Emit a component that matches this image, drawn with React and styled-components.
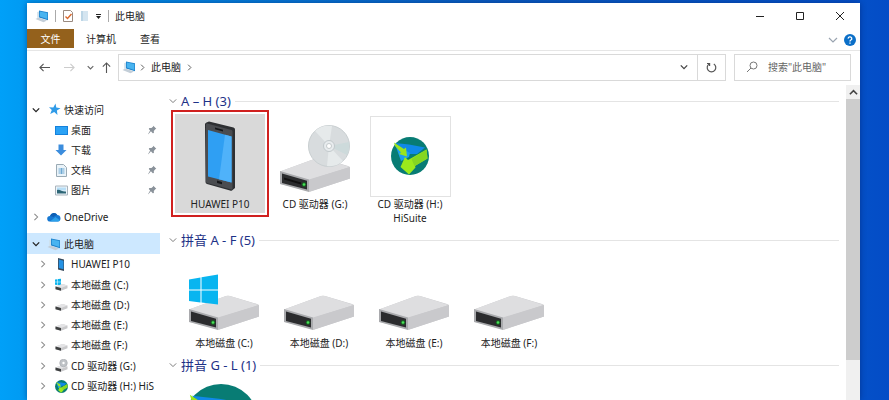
import React from 'react';
import styled, { createGlobalStyle, css } from 'styled-components';

const Global = createGlobalStyle`
  *, *::before, *::after { box-sizing: border-box; }
  html, body, #root { height: 100%; }
  body {
    margin: 0;
    overflow: hidden;
    color: #222;
    font: 10px/14px "Noto Sans", "Noto Sans CJK SC", sans-serif;
  }
  button, input { font: inherit; color: inherit; }
  svg { display: block; flex: none; }
`;

const Desktop = styled.div`
  height: 100%;
  padding: 3px 29px 0 27px;
  background: linear-gradient(90deg, #00a0f8 0%, #0098f0 4%, #0a5cc0 55%, #0450c8 97%, #044cc6 100%);
`;

const Window = styled.main`
  display: flex;
  flex-direction: column;
  height: 100%;
  background: #fff;
  box-shadow: 0 0 6px rgba(0, 20, 80, 0.45);
`;

const PlainButton = styled.button`
  display: flex;
  align-items: center;
  justify-content: center;
  padding: 0;
  border: 0;
  background: none;
`;

const TitleBar = styled.header`
  display: flex;
  align-items: center;
  height: 26px;
  padding-left: 8px;
`;

const QuickTools = styled.div`
  display: flex;
  align-items: center;
  gap: 6px;
`;

const Rule = styled.span`
  width: 1px;
  height: 12px;
  background: #aaa;
`;

const Title = styled.h1`
  flex: 1;
  margin: 0 0 0 6px;
  font-size: 10px;
  font-weight: 400;
`;

const WindowButton = styled(PlainButton)`
  width: 40px;
  height: 26px;
`;

const Ribbon = styled.nav`
  display: flex;
  align-items: center;
  height: 22px;
  padding-right: 4px;
  border-bottom: 1px solid #e6e6e6;
`;

const Tab = styled(PlainButton)`
  height: 19px;
  margin-bottom: 2px;
  padding: 0 12px;
  ${(p) => p.$primary && css`
    width: 47px;
    background: #94611c;
    color: #fff;
  `}
`;

const RibbonEnd = styled.div`
  display: flex;
  align-items: center;
  gap: 6px;
  margin-left: auto;
`;

const NavBar = styled.div`
  display: flex;
  align-items: center;
  height: 32px;
  padding: 0 9px 0 8px;
`;

const NavButton = styled(PlainButton)`
  width: ${(p) => p.$width}px;
  height: 24px;
`;

const Address = styled.div`
  display: flex;
  align-items: center;
  flex: 1;
  height: 27px;
  padding-left: 3px;
  border: 1px solid #d9d9d9;
`;

const Crumb = styled(PlainButton)`
  gap: 5px;
`;

const CrumbRoot = styled.span`
  display: flex;
  align-items: center;
  gap: 3px;
`;

const Spacer = styled.span`
  flex: 1;
`;

const Refresh = styled(PlainButton)`
  width: 28px;
  height: 100%;
  border-left: 1px solid #d9d9d9;
`;

const Search = styled.label`
  display: flex;
  align-items: center;
  gap: 10px;
  width: 117px;
  height: 27px;
  margin-left: 8px;
  padding-left: 11px;
  border: 1px solid #d9d9d9;

  input {
    flex: 1;
    min-width: 0;
    padding: 0;
    border: 0;
    outline: 0;
    background: none;
  }
  input::placeholder { color: #666; opacity: 1; }
`;

const Body = styled.div`
  display: flex;
  flex: 1;
  min-height: 0;
`;

const Sidebar = styled.aside`
  width: 133px;
  padding-top: 16px;
  overflow: hidden;
`;

const Branch = styled.section`
  margin-bottom: 6px;
`;

const Sublist = styled.ul`
  margin: 0 0 1px;
  padding: 0;
  list-style: none;
`;

const Node = styled.a`
  display: flex;
  align-items: center;
  gap: 7px;
  height: ${(p) => (p.$child ? 20 : 21)}px;
  padding-left: ${(p) => (p.$child ? 12 : 5)}px;
  color: inherit;
  text-decoration: none;
  white-space: nowrap;
  background: ${(p) => (p.$selected ? '#cde8ff' : 'none')};
`;

const NodeIcon = styled.span`
  display: flex;
  flex: none;
  justify-content: center;
  width: 14px;
  margin-right: -4px;
`;

const PinSlot = styled.span`
  margin-left: auto;
  padding-right: 3px;
`;

const Content = styled.div`
  flex: 1;
  min-width: 0;
  padding: 9px 7px 0 9px;
  overflow: hidden;
`;

const GroupHeader = styled.h2`
  display: flex;
  align-items: center;
  gap: 4px;
  height: 18px;
  margin: 0;
  color: #1e3287;
  font-size: 13px;
  font-weight: 400;
  line-height: 18px;

  &::after {
    content: "";
    flex: 1;
    height: 1px;
    background: #e4e4e4;
  }
`;

const Tiles = styled.div`
  display: flex;
  gap: 5px;
  height: ${(p) => p.$height}px;
  padding: 4px 0 0 ${(p) => (p.$inset ? 10 : 6)}px;
`;

const Tile = styled.button`
  display: flex;
  flex-direction: column;
  align-items: center;
  align-self: flex-start;
  width: 90px;
  padding: 2px 0;
  border: 0;
  background: ${(p) => (p.$selected ? '#d9d9d9' : 'none')};
  ${(p) => p.$selected && css`
    outline: 2px solid #d0201f;
    outline-offset: 2px;
  `}
`;

const Thumb = styled.span`
  display: block;
  width: 81px;
  height: 81px;
  border: 1px solid ${(p) => (p.$framed ? '#e2e2e2' : 'transparent')};
`;

const TileLabel = styled.span`
  width: 80px;
  line-height: 14px;
`;

const ScrollBar = styled.div`
  width: 14px;
  margin-top: 2px;
  background: #f0f0f0;
`;

const ScrollArrow = styled(PlainButton)`
  width: 100%;
  height: 14px;
`;

const ScrollThumb = styled.div`
  height: 83%;
  background: #cdcdcd;
`;

const Chevron = ({ dir = 'down', size = 8, color = '#444', weight = 1.2 }) => {
  const d = { down: 'M1 3l4 4 4-4', up: 'M1 7l4-4 4 4', right: 'M3 1l4 4-4 4' }[dir];
  return (
    <svg width={size} height={size} viewBox="0 0 10 10" fill="none" stroke={color} strokeWidth={weight}>
      <path d={d} />
    </svg>
  );
};

const PcIcon = ({ size = 14 }) => (
  <svg width={size} height={size} viewBox="0 0 14 14">
    <path d="M4 1.500l9 1.800v8L4 8.500z" fill="#1f83cc" />
    <path d="M4.800 2.600l7.500 1.500v5.800L4.800 7.600z" fill="#49b4f0" />
    <path d="M.5 10l3-1.500 8.500 3-3.500 1.800z" fill="#c3ced8" />
    <path d="M2.200 3v6L4 8.500v-6z" fill="#cfe0ec" />
  </svg>
);

const CheckPage = () => (
  <svg width="12" height="14" viewBox="0 0 12 14" fill="none">
    <path d="M1.500 1.500h7l2 2v9h-9z" fill="#fff" stroke="#9a8a80" />
    <path d="M3.500 7.500l2 2 4-4.500" stroke="#d9672b" strokeWidth="1.400" />
  </svg>
);

const PalePage = () => (
  <svg width="9" height="12" viewBox="0 0 9 12">
    <path d="M1 1h7v10H1z" fill="#d5e5f0" />
    <path d="M1 1h2v10H1z" fill="#bdd6e6" />
  </svg>
);

const MenuMark = () => (
  <svg width="7" height="7" viewBox="0 0 7 7">
    <path d="M1 1h5v1H1zM1 3h5L3.500 6z" fill="#222" />
  </svg>
);

const Arrow = ({ dir, color = '#555' }) => {
  const d = { left: 'M12 6H1M5 2L1 6l4 4', right: 'M0 6h11M7 2l4 4-4 4', up: 'M6 12V1M2 5l4-4 4 4' }[dir];
  return (
    <svg width="11" height="11" viewBox="0 0 12 12" fill="none" stroke={color} strokeWidth="1.200">
      <path d={d} />
    </svg>
  );
};

const StarIcon = () => (
  <svg width="13" height="13" viewBox="0 0 13 13">
    <path d="M7.500.5l.8 4 4.200.8-3.600 2.200.6 4.500-3.300-2.900-4 2 1.600-4L1 4.300l4.300.3z" fill="#2f9be8" />
  </svg>
);

const DesktopIcon = () => (
  <svg width="13" height="11" viewBox="0 0 13 11">
    <path d="M0 1h13v9H0z" fill="#1481dc" />
    <path d="M1 2h11v7H1z" fill="#2ba2f5" />
  </svg>
);

const DownIcon = () => (
  <svg width="12" height="12" viewBox="0 0 12 12">
    <path d="M3.500.5h5V6h3L6 11.500.5 6h3z" fill="#3c8ddd" />
  </svg>
);

const DocIcon = () => (
  <svg width="11" height="13" viewBox="0 0 11 13">
    <path d="M.5.5h7l3 3v9H.5z" fill="#eaf3f9" stroke="#9aaab4" />
    <path d="M2.500 5h6M2.500 7h6M2.500 9h6M5.500 4v6" stroke="#6fa9d2" />
  </svg>
);

const PhotoIcon = () => (
  <svg width="13" height="11" viewBox="0 0 13 11">
    <path d="M.5 1h12v9H.5z" fill="#eef5fa" stroke="#a9b4bc" />
    <path d="M2 2.500h9v3H2z" fill="#b8def6" />
    <path d="M2 5c3-1 5 2 9 1.500v2H2z" fill="#2d6676" />
  </svg>
);

const CloudIcon = () => (
  <svg width="14" height="10" viewBox="0 0 14 10">
    <path d="M3 9.500a2.800 2.800 0 0 1 0-5.600A4 4 0 0 1 10.300 3a3.300 3.300 0 0 1 .7 6.500z" fill="#1678d2" />
    <path d="M3 9.500L8.500 5l4.700 3.500a3 3 0 0 1-2.200 1z" fill="#2ba0ea" />
    <path d="M3 3.900A4 4 0 0 1 10.300 3C8.500 3 7.500 4 6.800 5z" fill="#0e5fb4" />
  </svg>
);

const PinIcon = () => (
  <svg width="9" height="10" viewBox="0 0 9 10">
    <path d="M5.300.8l3 3-1 .5-1.500 1.600.1 2-1.100.3L2.900 6.300.3 9.300l-.2-.2 2-3.600L.8 3.900l.5-.9 2.100.1L5 1.700z" fill="#8a929a" />
  </svg>
);

const SmallPhone = () => (
  <svg width="8" height="13" viewBox="0 0 8 13">
    <path d="M1 0l6 1.500V13l-6-1.500z" fill="#36485a" />
    <path d="M1.800 1.500L6.500 2.700v8.600L1.800 10z" fill="#2592e4" />
  </svg>
);

const SmallDrive = ({ overlay }) => (
  <svg width="14" height="14" viewBox="0 0 14 14">
    {overlay === 'windows' && <path d="M1 1.500l2.500-.3v2.600H1zM4 1.100L7 .8v3H4zM1 4.300h2.500V7L1 6.700zM4 4.300h3v3l-3-.3z" fill="#0ab4ee" />}
    <path d="M1.500 8.500L8.500 6l5 1.500v2.800L7 12.800l-5.500-1.500z" fill="#c9c9cb" />
    <path d="M1.500 8.500L8.500 6l5 1.500L7 10z" fill="#e4e4e6" />
    <path d="M1.500 8.600L7 10v2.700l-5.500-1.400z" fill="#3d3f40" />
    {overlay === 'disc' && (
      <>
        <circle cx="9.500" cy="4" r="3.800" fill="#bfc3c7" stroke="#a4a8ac" strokeWidth=".6" />
        <circle cx="9.500" cy="4" r="1.200" fill="#fff" />
      </>
    )}
  </svg>
);

const HiSuiteMark = () => (
  <>
    <circle cx="19" cy="19" r="19" fill="#087c74" />
    <path d="M4 6l14 1.500L34 10.500l-8 6.500-7 0-7-5z" fill="#1089e8" />
    <path d="M4 7l6 17 4-2 4-2 1-4z" fill="#1c9ff0" />
    <path d="M3 5.500l10 6.500 2-1.500 1 9-8-2.500 2-1.500-6-6.500z" fill="#9be51f" />
    <path d="M35.500 12.500l1 9L24 29l.5 1.500-6.500 7-8.500-7.500 4.500-10 3 3z" fill="#9bea1c" />
    <path d="M35.500 12.500l1 9L23.500 29l-3-7z" fill="#85d622" />
  </>
);

const HiSuiteSmall = () => (
  <svg width="13" height="13" viewBox="0 0 38 38"><HiSuiteMark /></svg>
);

const Canvas = ({ children }) => (
  <svg width="80" height="80" viewBox="0 0 80 80">{children}</svg>
);

const BigPhone = () => (
  <Canvas>
    <path d="M24 7.500q0-1.500 1.500-2L28 4.500l24.500 6q1.500.5 1.500 2V71l-3 2.500q-1 .5-2 0L26 67q-1.500-.5-1.500-2z" fill="#2e3033" />
    <path d="M25 7.500q0-1 1-1L50.500 13q1 .3 1 1.500v57q0 1.500-1 1L26 66q-1-.3-1-1.500z" fill="#4a4c50" />
    <path d="M27 13l23.500 6.500v46L27 59.500z" fill="#2f9ff3" />
    <path d="M44 17.700l6.500 1.800v46L38 62.300z" fill="#4fb2fa" />
    <path d="M34 10.500l8 2.200v1.800l-8-2.200zM36 63.500l5 1.400v2.300L36 66z" fill="#15171a" />
  </Canvas>
);

const DriveShape = () => (
  <>
    <path d="M5 54.500L42 41q2-.7 4 0l27 8q2 .6 2 2v10.500L35 74.500 6 67z" fill="#c8c8cb" />
    <path d="M5 54.500L42 41q2-.7 4 0l29 9-41 13z" fill="#dedee0" />
    <path d="M34 62.500L75 50v11.500L34 75z" fill="#c9c9cc" />
    <path d="M5 54l29 8.500V75L5 67z" fill="#a9aaad" />
    <path d="M7 56.500l25 7.200v8.800L7 66z" fill="#2b2c2e" />
    <circle cx="29" cy="67.500" r="2.200" fill="#176d22" />
    <circle cx="29" cy="67.500" r="1.200" fill="#4be05a" />
  </>
);

const BigDrive = ({ windows }) => (
  <Canvas>
    <g transform="translate(-1 -1)"><DriveShape /></g>
    {windows && (
      <path d="M4 23.500l11.500-2v12H4zM16.500 21.300L33 18.500v15H16.500zM4 34.500h11.500v12L4 45zM16.500 34.500H33v14l-16.500-2z" fill="#08b5f0" />
    )}
  </Canvas>
);

const DiscDrive = () => (
  <Canvas>
    <g transform="translate(-1 0)">
      <DriveShape />
      <path d="M9 60.500l17 5v2l-17-5z" fill="#111" />
    </g>
    <circle cx="53" cy="29" r="20.500" fill="#d8dcde" stroke="#c9cfd1" />
    <path d="M53 29L39 14a20 20 0 0 1 17-5z" fill="#e6eaeb" />
    <path d="M53 29l14 15a20 20 0 0 1-16 5z" fill="#e6eaeb" />
    <path d="M53 29l20-4a20 20 0 0 1-2 13z" fill="#cddadb" />
    <circle cx="53" cy="29" r="5.500" fill="#e8ecee" stroke="#c1c8cb" />
    <circle cx="53" cy="29" r="2.500" fill="#fff" stroke="#c4cacc" />
  </Canvas>
);

const BigHiSuite = ({ large }) => (
  <Canvas>
    <g transform={large ? 'translate(3 3) scale(1.95)' : 'translate(20 20)'}>
      <HiSuiteMark />
    </g>
  </Canvas>
);

const quickItems = [
  ['桌面', <DesktopIcon />],
  ['下载', <DownIcon />],
  ['文档', <DocIcon />],
  ['图片', <PhotoIcon />],
];

const deviceLists = [
  [['HUAWEI P10', <SmallPhone />]],
  [
    ['本地磁盘 (C:)', <SmallDrive overlay="windows" />],
    ['本地磁盘 (D:)', <SmallDrive />],
    ['本地磁盘 (E:)', <SmallDrive />],
    ['本地磁盘 (F:)', <SmallDrive />],
  ],
  [
    ['CD 驱动器 (G:)', <SmallDrive overlay="disc" />],
    ['CD 驱动器 (H:) HiS', <HiSuiteSmall />],
  ],
];

const groups = [
  {
    title: 'A – H (3)',
    height: 121,
    tiles: [
      { label: 'HUAWEI P10', icon: <BigPhone />, selected: true },
      { label: 'CD 驱动器 (G:)', icon: <DiscDrive /> },
      { label: 'CD 驱动器 (H:) HiSuite', icon: <BigHiSuite />, framed: true },
    ],
  },
  {
    title: '拼音 A - F (5)',
    height: 107,
    inset: true,
    tiles: [
      { label: '本地磁盘 (C:)', icon: <BigDrive windows /> },
      { label: '本地磁盘 (D:)', icon: <BigDrive /> },
      { label: '本地磁盘 (E:)', icon: <BigDrive /> },
      { label: '本地磁盘 (F:)', icon: <BigDrive /> },
    ],
  },
  {
    title: '拼音 G - L (1)',
    height: 107,
    tiles: [{ icon: <BigHiSuite large /> }],
  },
];

function TreeNode({ label, icon, child, open, selected, pinned, leaf }) {
  return (
    <Node href="#" $child={child} $selected={selected}>
      {leaf ? <Chevron color="none" /> : <Chevron dir={open ? 'down' : 'right'} color={open ? '#222' : '#888'} weight={open ? 1.6 : 1.3} />}
      <NodeIcon>{icon}</NodeIcon>
      {label}
      {pinned && <PinSlot><PinIcon /></PinSlot>}
    </Node>
  );
}

export default function App() {
  return (
    <Desktop>
      <Global />
      <Window>
        <TitleBar>
          <QuickTools>
            <PcIcon />
            <Rule />
            <PlainButton aria-label="属性"><CheckPage /></PlainButton>
            <PlainButton aria-label="新建文件夹"><PalePage /></PlainButton>
            <PlainButton aria-label="自定义快速访问工具栏"><MenuMark /></PlainButton>
            <Rule />
          </QuickTools>
          <Title>此电脑</Title>
          <WindowButton aria-label="最小化">
            <svg width="10" height="10" viewBox="0 0 10 10"><path d="M1 5h8v1H1z" fill="#222" /></svg>
          </WindowButton>
          <WindowButton aria-label="最大化">
            <svg width="10" height="10" viewBox="0 0 10 10" fill="none" stroke="#222"><path d="M1.500 1.500h7v7h-7z" /></svg>
          </WindowButton>
          <WindowButton aria-label="关闭">
            <svg width="10" height="10" viewBox="0 0 10 10" stroke="#222"><path d="M1 1l8 8M9 1L1 9" /></svg>
          </WindowButton>
        </TitleBar>

        <Ribbon>
          <Tab $primary>文件</Tab>
          <Tab>计算机</Tab>
          <Tab>查看</Tab>
          <RibbonEnd>
            <PlainButton aria-label="展开功能区"><Chevron size={10} color="#9aa4b0" /></PlainButton>
            <PlainButton aria-label="帮助">
              <svg width="12" height="12" viewBox="0 0 12 12" fill="none">
                <circle cx="6" cy="6" r="6" fill="#0b6fc8" />
                <path d="M4.200 4.600a1.800 1.700 0 1 1 2.700 1.400q-.9.500-.9 1.400M6 8.400v1.400" stroke="#fff" strokeWidth="1.300" />
              </svg>
            </PlainButton>
          </RibbonEnd>
        </Ribbon>

        <NavBar>
          <NavButton $width={18} aria-label="后退"><Arrow dir="left" /></NavButton>
          <NavButton $width={32} aria-label="前进"><Arrow dir="right" color="#ccc" /></NavButton>
          <NavButton $width={10} aria-label="最近位置"><Chevron size={7} color="#666" weight={1.6} /></NavButton>
          <NavButton $width={23} aria-label="上移"><Arrow dir="up" /></NavButton>
          <Address>
            <Crumb>
              <CrumbRoot>
                <PcIcon />
                <Chevron dir="right" size={7} />
              </CrumbRoot>
              此电脑
              <Chevron dir="right" size={7} />
            </Crumb>
            <Spacer />
            <NavButton $width={27} aria-label="历史记录"><Chevron weight={1.6} /></NavButton>
            <Refresh aria-label="刷新">
              <svg width="11" height="11" viewBox="0 0 11 11" fill="none" stroke="#555" strokeWidth="1.200">
                <path d="M7.800 1.900a4.300 4.300 0 1 1-4.600 0M3.600 4V1.500H1" />
              </svg>
            </Refresh>
          </Address>
          <Search>
            <svg width="12" height="12" viewBox="0 0 12 12" fill="none" stroke="#777">
              <circle cx="7.500" cy="4.500" r="3.500" />
              <path d="M5 7l-4 4" />
            </svg>
            <input type="text" aria-label="搜索" placeholder={'搜索"此电脑"'} />
          </Search>
        </NavBar>

        <Body>
          <Sidebar>
            <Branch>
              <TreeNode label="快速访问" icon={<StarIcon />} open />
              <Sublist>
                {quickItems.map(([label, icon]) => (
                  <li key={label}><TreeNode label={label} icon={icon} child pinned leaf /></li>
                ))}
              </Sublist>
            </Branch>
            <Branch>
              <TreeNode label="OneDrive" icon={<CloudIcon />} />
            </Branch>
            <Branch>
              <TreeNode label="此电脑" icon={<PcIcon />} open selected />
              {deviceLists.map((list) => (
                <Sublist key={list[0][0]}>
                  {list.map(([label, icon]) => (
                    <li key={label}><TreeNode label={label} icon={icon} child /></li>
                  ))}
                </Sublist>
              ))}
            </Branch>
          </Sidebar>

          <Content>
            {groups.map((g) => (
              <section key={g.title}>
                <GroupHeader><Chevron color="#777" />{g.title}</GroupHeader>
                <Tiles $height={g.height} $inset={g.inset}>
                  {g.tiles.map((t, i) => (
                    <Tile key={i} $selected={t.selected}>
                      <Thumb $framed={t.framed}>{t.icon}</Thumb>
                      {t.label && <TileLabel>{t.label}</TileLabel>}
                    </Tile>
                  ))}
                </Tiles>
              </section>
            ))}
          </Content>

          <ScrollBar>
            <ScrollArrow aria-label="向上滚动"><Chevron dir="up" size={9} weight={1.8} /></ScrollArrow>
            <ScrollThumb />
          </ScrollBar>
        </Body>
      </Window>
    </Desktop>
  );
}
